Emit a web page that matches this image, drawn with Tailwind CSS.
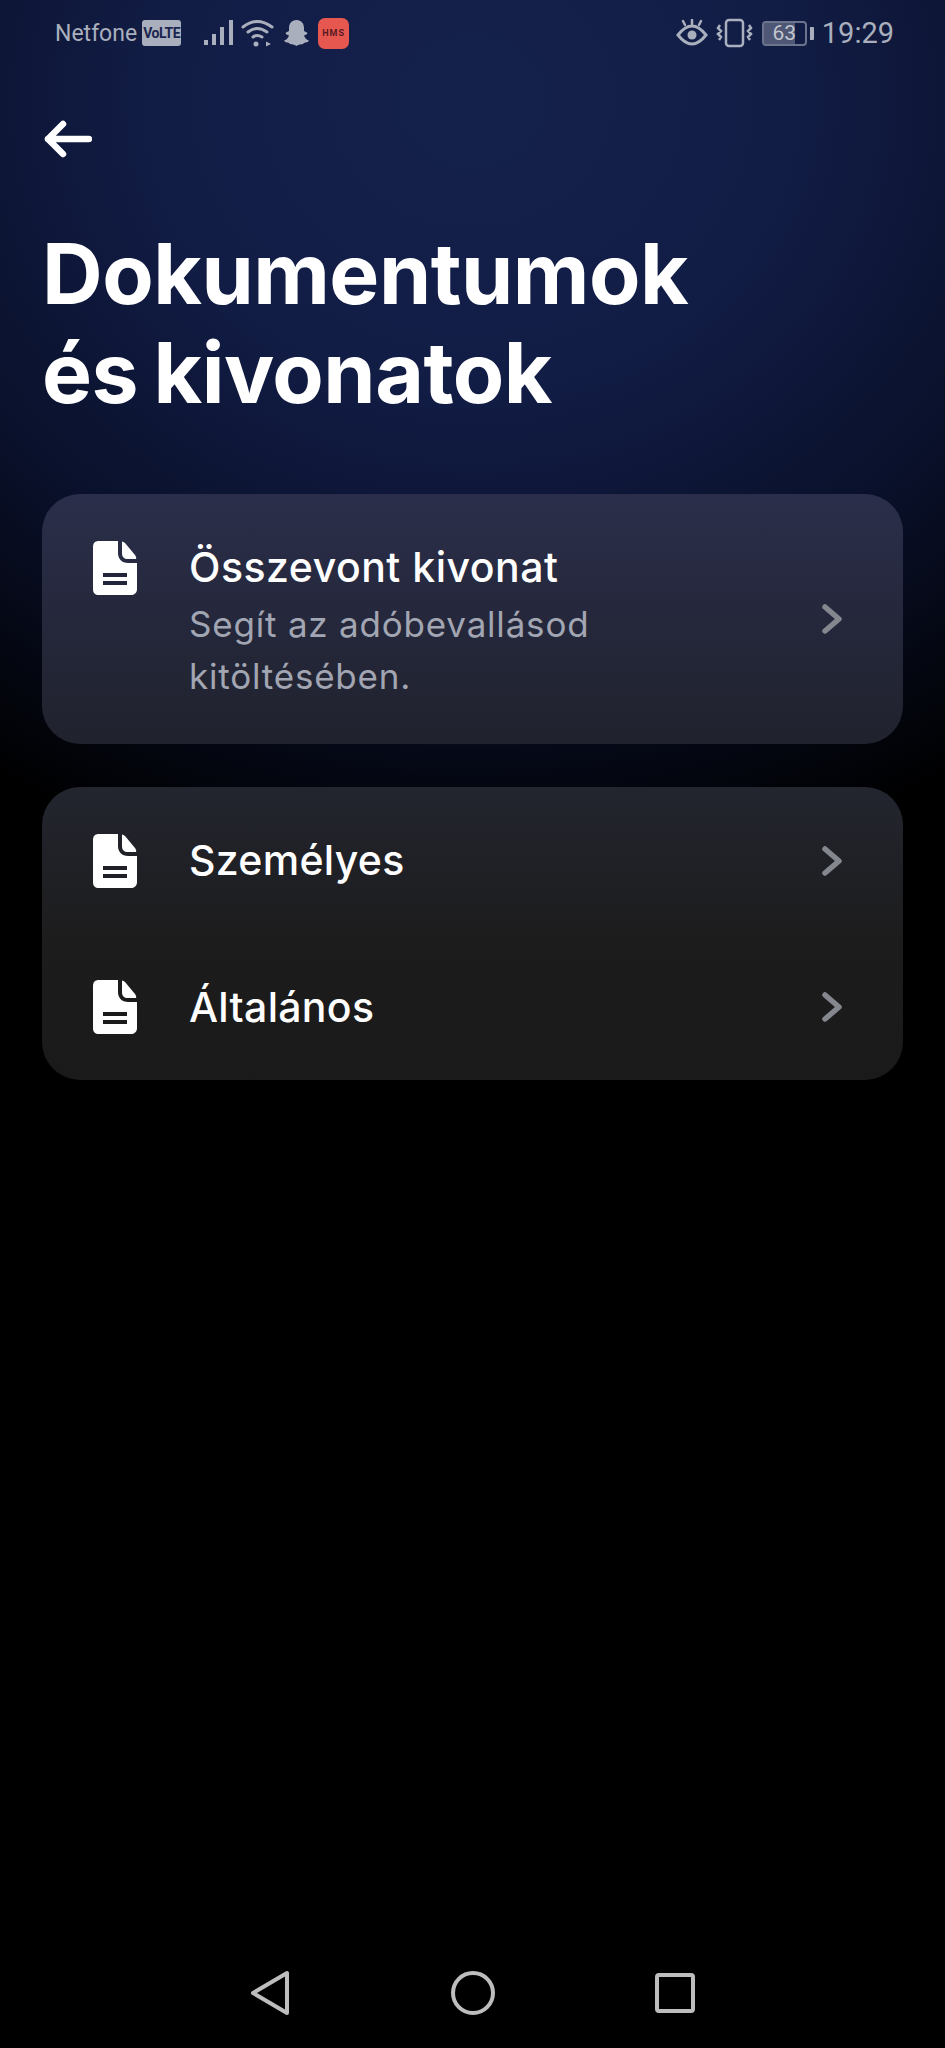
<!DOCTYPE html>
<html lang="hu">
<head>
<meta charset="utf-8">
<script src="https://cdn.jsdelivr.net/npm/@tailwindcss/browser@4"></script>
</head>
<body class="bg-black">
<div class="relative w-[945px] h-[2048px] overflow-hidden flex flex-col font-['Inter',sans-serif] text-white bg-[radial-gradient(ellipse_900px_800px_at_50%_100px,#14214b_0%,#121d46_35%,#0a112c_65%,#000000_100%)]">
  <!-- status bar -->
  <div class="h-[66px] pl-[55px] pr-[51px] flex items-center justify-between text-[#a9afbc] font-['Roboto',sans-serif] shrink-0">
    <div class="flex items-center">
      <span class="text-[23px] leading-none">Netfone</span>
      <span class="ml-[5px] w-[39px] h-[26px] rounded-[3px] bg-[#a9afbc] text-[#1a2550] text-[14px] font-bold flex items-center justify-center leading-none tracking-[-0.5px]">VoLTE</span>
      <svg class="ml-[23px]" width="30" height="28" viewBox="0 0 30 28" fill="#a9afbc"><rect x="0" y="21" width="4" height="5"/><rect x="8" y="15" width="4" height="11"/><rect x="16" y="8" width="4" height="18"/><rect x="25" y="1" width="4" height="25"/></svg>
      <svg class="ml-[7px]" width="34" height="28" viewBox="0 0 34 28" fill="none" stroke="#a9afbc" stroke-width="3" stroke-linecap="round"><path d="M2 8 Q16 -3 31 8"/><path d="M7 13 Q16 6 26 13"/><path d="M12 18 Q16 15 21 18"/><circle cx="15" cy="25" r="2.500" fill="#a9afbc" stroke="none"/><path d="M25 22.500l5 2.500-5 2.500z" fill="#a9afbc" stroke="none"/></svg>
      <svg class="ml-[8px]" width="27" height="28" viewBox="0 0 27 28" fill="#a9afbc"><path d="M13.5 1c5 0 7.500 3.800 7.500 8v3l3 1.500c1 .8 0 2-3 3 1 3 3 4.500 5 5-.5 1.500-3 2-5 2.500-1 2-4 .5-7.500 3-3.500-2.500-6.500-1-7.500-3-2-.5-4.500-1-5-2.500 2-.5 4-2 5-5-3-1-4-2.200-3-3L6 12V9c0-4.200 2.500-8 7.500-8z"/></svg>
      <div class="ml-[8px] w-[31px] h-[31px] rounded-[7px] bg-[#e5574f] text-[#5a1a22] text-[9px] font-bold tracking-[1px] flex items-center justify-center leading-none">HMS</div>
    </div>
    <div class="flex items-center">
      <svg width="32" height="28" viewBox="0 0 32 28" fill="none" stroke="#a9afbc" stroke-width="3"><path d="M2 16 Q16 -2 30 16 Q16 34 2 16z"/><circle cx="16" cy="16" r="4.500" fill="#a9afbc" stroke="none"/><path d="M16 1v4M7 2l2 4M25 2l-2 4" stroke-width="2.500" stroke-linecap="round"/></svg>
      <svg class="ml-[8px]" width="37" height="30" viewBox="0 0 37 30" fill="none" stroke="#a9afbc" stroke-width="2.500"><rect x="10" y="2" width="17" height="26" rx="3"/><path d="M4 7l-2 3 3 3-3 3 3 3-2 3M33 7l2 3-3 3 3 3-3 3 2 3" stroke-width="2.500"/></svg>
      <div class="ml-[9px] relative w-[45px] h-[25px] rounded-[4px] border-2 border-[#a9afbc]/60 overflow-hidden flex items-center">
        <div class="absolute left-0 top-0 bottom-0 w-[31px] bg-[#a9afbc]/40"></div>
        <span class="relative w-full text-center text-[21px] leading-none text-[#c3c7d0]">63</span>
      </div>
      <div class="ml-[3px] w-[4px] h-[13px] bg-[#a9afbc] rounded-r-[1px]"></div>
      <span class="ml-[8px] text-[29px] leading-none">19:29</span>
    </div>
  </div>

  <!-- back arrow -->
  <div class="mt-[54px] ml-[44px] h-[32px] shrink-0">
    <svg width="48" height="40" viewBox="0 0 48 40" fill="none" stroke="#ffffff" stroke-width="6.500" stroke-linecap="round" stroke-linejoin="round"><path d="M45 19H4M19 4L4 19l15 15"/></svg>
  </div>

  <!-- title -->
  <h1 class="mt-[72px] ml-[42px] text-[84px] leading-[99px] font-bold tracking-[-0.5px] [word-spacing:-4px]">Dokumentumok<br>és kivonatok</h1>

  <!-- cards -->
  <div class="mt-[72px] mx-[42px] flex flex-col gap-[43px]">
    <div class="h-[250px] rounded-[38px] bg-[linear-gradient(180deg,#2a2e4a,#20222d)] flex pl-[50px] pr-[60px]">
      <svg class="mt-[46px] shrink-0" width="46" height="56" viewBox="0 0 46 56"><path fill="#ffffff" d="M7 1h19v12c0 6 4 10 10 10h9v26c0 4-3 6-6 6H7c-4 0-6-2-6-6V7c0-4 2-6 6-6z"/><path fill="#ffffff" d="M30 1.500c1 0 2 .5 3 1.500l10 12c1 1.500 1.500 3 1 4h-8c-4 0-6-2-6-6z"/><path stroke="#23263a" stroke-width="4" d="M11 35h24M11 43h24"/></svg>
      <div class="ml-[51px] flex-1 pt-[51px]">
        <div class="text-[41px] leading-[45px] font-medium tracking-[0.5px]">Összevont kivonat</div>
        <div class="mt-[8px] w-[480px] text-[35px] leading-[52px] text-[#a2a5b2] tracking-[0.8px]">Segít az adóbevallásod kitöltésében.</div>
      </div>
      <svg class="self-center shrink-0" width="22" height="32" viewBox="0 0 22 32" fill="none" stroke="#85878f" stroke-width="5.500" stroke-linecap="round" stroke-linejoin="round"><path d="M4 4l14 12L4 28"/></svg>
    </div>
    <div class="h-[293px] pt-[1px] rounded-[38px] bg-[linear-gradient(180deg,#23252f,#1c1c1c_55%,#1a1a1a)] flex flex-col">
      <div class="h-[146px] flex items-center pl-[50px] pr-[60px]">
        <svg class="shrink-0" width="46" height="56" viewBox="0 0 46 56"><path fill="#ffffff" d="M7 1h19v12c0 6 4 10 10 10h9v26c0 4-3 6-6 6H7c-4 0-6-2-6-6V7c0-4 2-6 6-6z"/><path fill="#ffffff" d="M30 1.500c1 0 2 .5 3 1.500l10 12c1 1.500 1.500 3 1 4h-8c-4 0-6-2-6-6z"/><path stroke="#1f2027" stroke-width="4" d="M11 35h24M11 43h24"/></svg>
        <span class="ml-[51px] flex-1 text-[41px] font-medium tracking-[0.3px]">Személyes</span>
        <svg class="shrink-0" width="22" height="32" viewBox="0 0 22 32" fill="none" stroke="#85878f" stroke-width="5.500" stroke-linecap="round" stroke-linejoin="round"><path d="M4 4l14 12L4 28"/></svg>
      </div>
      <div class="h-[146px] flex items-center pl-[50px] pr-[60px] mt-[1px]">
        <svg class="shrink-0" width="46" height="56" viewBox="0 0 46 56"><path fill="#ffffff" d="M7 1h19v12c0 6 4 10 10 10h9v26c0 4-3 6-6 6H7c-4 0-6-2-6-6V7c0-4 2-6 6-6z"/><path fill="#ffffff" d="M30 1.500c1 0 2 .5 3 1.500l10 12c1 1.500 1.500 3 1 4h-8c-4 0-6-2-6-6z"/><path stroke="#1b1b1b" stroke-width="4" d="M11 35h24M11 43h24"/></svg>
        <span class="ml-[51px] flex-1 text-[41px] font-medium tracking-[0.3px]">Általános</span>
        <svg class="shrink-0" width="22" height="32" viewBox="0 0 22 32" fill="none" stroke="#85878f" stroke-width="5.500" stroke-linecap="round" stroke-linejoin="round"><path d="M4 4l14 12L4 28"/></svg>
      </div>
    </div>
  </div>

  <!-- nav bar -->
  <div class="mt-auto h-[110px] px-[250px] flex items-center justify-between shrink-0">
    <svg width="40" height="46" viewBox="0 0 40 46" fill="none" stroke="#bdbdbd" stroke-width="4" stroke-linejoin="round"><path d="M37 3v40L3 23z"/></svg>
    <svg width="46" height="46" viewBox="0 0 46 46" fill="none" stroke="#bdbdbd" stroke-width="4"><circle cx="23" cy="23" r="20"/></svg>
    <svg width="40" height="40" viewBox="0 0 40 40" fill="none" stroke="#bdbdbd" stroke-width="4" stroke-linejoin="round"><rect x="2" y="2" width="36" height="36" rx="2"/></svg>
  </div>
</div>
</body>
</html>
